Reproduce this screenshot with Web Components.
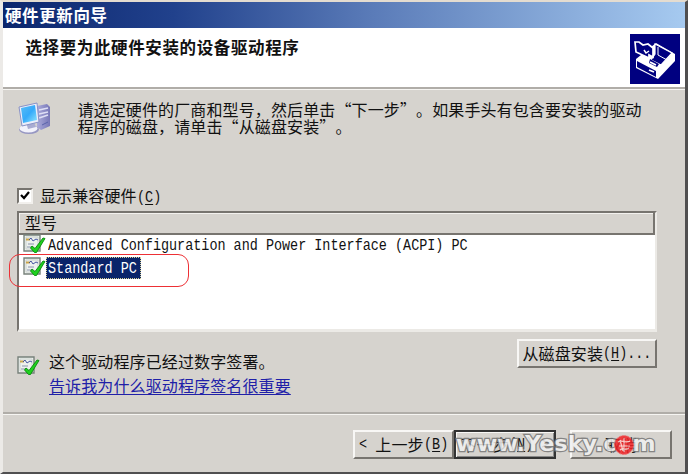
<!DOCTYPE html>
<html lang="zh-CN"><head><meta charset="utf-8"><title>硬件更新向导</title>
<style>html,body{margin:0;width:688px;height:474px;overflow:hidden;background:#d6d3ce}</style></head>
<body><hardware-wizard></hardware-wizard>
<script>
const define=(name,css,html)=>{
  const t=document.createElement('template');
  t.innerHTML=`<style>*,:host{box-sizing:border-box}${css}</style>${html}`;
  customElements.define(name,class extends HTMLElement{
    constructor(){super();this.attachShadow({mode:'open'}).append(t.content.cloneNode(true))}
  });
};
define('latin-text',`:host{display:inline-block;white-space:pre;font:16.5px "Liberation Mono",monospace;letter-spacing:0;line-height:inherit}
span{display:inline-block;transform:scaleX(.815);transform-origin:0 50%;margin-right:calc(var(--n,1) * -1.83px)}`,
`<span><slot></slot></span>`);
define('title-bar',`:host{display:block;height:26px;padding-left:2px;color:#fff;background:linear-gradient(90deg,#0b266d,#21418c 25%,#5a7bb8 54%,#a6caf0);font:bold 16.5px/27px "Noto Sans CJK SC",sans-serif;letter-spacing:.6px;white-space:nowrap}`,`<slot></slot>`);
define('wizard-header',`:host{display:flex;justify-content:space-between;height:59px;background:#fff;padding:7px 5px 0 22.5px;font:bold 16.5px/25px "Noto Sans CJK SC",sans-serif;letter-spacing:.62px}
svg{display:block;margin-top:-1px}`,
`<slot></slot><svg width="50" height="50" viewBox="0 0 50 50"><path fill="#000080" d="M0 0h50v50H0z"/><path d="M6 25 26 9 45 20V27L28 45 6 34Z" fill="#fff"/><path d="M25 10 42 19 31 31 21 26 25 20Z" fill="#000080" stroke="#fff" stroke-width="1.2"/><path d="M28 13v8l9 5" stroke="#fff" fill="none"/><path d="M7 27 26 37v6L7 33Z" fill="#000080"/><path d="m20 25 9 5-2 3-8-4Z" fill="#000080"/><path d="m20 28 6 3M19 36l5 2" stroke="#fff" stroke-width="1.8"/><path d="M5 8h4l4 3 5-1 5 4v9l-4-2v3L6 18Z" fill="#000080" stroke="#fff" stroke-width="1.7"/><path d="m14 16 2 3 3-2" stroke="#fff" stroke-width="1.5" fill="none"/></svg>`);
define('etched-line',`:host{display:block;height:3px;border-top:2px solid #b0ada8;border-bottom:1px solid #f6f5f2;flex:none}`,``);
define('computer-icon',`:host{display:block;width:34px;height:35px;flex:none}svg{display:block}`,
`<svg width="34" height="35" viewBox="0 0 34 35"><defs><linearGradient id="s" x2="1" y2="1"><stop stop-color="#59bdf5"/><stop offset=".5" stop-color="#35aafa"/><stop offset="1" stop-color="#91e7ff"/></linearGradient><linearGradient id="c"><stop stop-color="#aaaada"/><stop offset="1" stop-color="#7777b7"/></linearGradient></defs>
<path d="M19 5 29 3l3 3v19l-9 4-4-3Z" fill="url(#c)"/><path d="m21 9 9-2m-9 6 9-2m-9 6 9-3" stroke="#dedff5" stroke-width="1.6"/><path d="M24 24l6-3" stroke="#5963aa"/><ellipse cx="11" cy="28.5" rx="10" ry="4.5" fill="#9696c2"/><ellipse cx="10.5" cy="27.5" rx="9" ry="4" fill="#f2f2fb"/><path d="M8 21h8l2 5-8 2Z" fill="#a9acd2"/><path d="M1 6 19 2l2 19L4 25Z" fill="#eceefa" stroke="#8992c7"/><path d="m3 7 14-3 2 15L5 22Z" fill="url(#s)"/></svg>`);
define('signed-icon',`:host{display:block;width:23px;height:20px;flex:none}svg{display:block}`,
`<svg width="23" height="20" viewBox="0 0 23 20"><path d="M1 1h16v16H1z" fill="#edf1ee" stroke="#77817b" stroke-width="1.4"/><path d="M3 3h12v12H3z" fill="none" stroke="#cbd2ce"/><path d="M3 5.5h4" stroke="#caa54b" stroke-width="2"/><path d="m6 6 2-2 2 3 3-2 2 1" fill="none" stroke="#4656a0"/><path d="M5 10h6M4 13h5" stroke="#8a94ad"/><path d="m9 12 3 2.5 8-10.5 2 .5-8.5 14h-2l-4-4.5Z" fill="#1fd11f" stroke="#08880c" stroke-width=".9"/></svg>`);
define('check-option',`:host{display:flex;align-items:center;gap:7px;height:22px}i{width:16px;height:16px;background:#fff;border:2px solid;border-color:#77746f #f2f0ed #f2f0ed #77746f}svg{display:block}`,
`<i><svg width="12" height="12"><path d="M2 5 5 8l5-6" fill="none" stroke="#000" stroke-width="2.2"/></svg></i><span><slot></slot></span>`);
define('model-row',`:host{display:flex;height:23px;align-items:center;padding-left:4px}signed-icon{margin-top:-6px}span{display:block;height:22px;line-height:19px;padding:0 4px 0 2px;margin:-3px 0 0;overflow:hidden}:host([selected]) span{background:#0a246a;color:#fff;outline:1px dotted #d6cf95;outline-offset:-1px}`,
`<signed-icon></signed-icon><span><slot></slot></span>`);
define('model-list',`:host{display:block;width:640px;height:121px;background:#fff;border:solid;border-width:2px 2px 3px 2px;border-color:#77746f #eceae6 #eceae6 #77746f}
header{height:22px;background:#d6d3ce;border:solid #77746f;border-width:0 2px 2px 0;padding-left:6px;line-height:19px;box-shadow:inset 1px 1px #f3f1ee}`,
`<header>型号</header><slot></slot>`);
define('push-button',`:host{display:flex;justify-content:center;align-items:center;width:102px;height:29px;background:#d6d3ce;border:solid;border-width:2px;border-color:#f8f7f5 #77746f #77746f #f8f7f5;white-space:pre;padding-bottom:1px;flex:none}:host([primary]){border-color:#333;box-shadow:inset 1px 1px #f8f7f5,inset -1px -1px #888}`,`<slot></slot>`);
define('site-watermark',`:host{position:absolute;left:453px;top:427px;width:200px;height:32px;font:bold 21px/30px "DejaVu Sans","Liberation Sans",sans-serif;letter-spacing:0;color:#f1f1f1;opacity:.85}
span{display:inline-block;white-space:nowrap;-webkit-text-stroke:2.4px #777;paint-order:stroke fill;transform:scaleX(1.065);transform-origin:0 50%}svg{position:absolute;left:157px;top:5px}`,
`<span>www.Yesky.com</span><svg width="22" height="22" viewBox="0 0 22 22"><circle cx="11" cy="11" r="9.5" fill="#f22428" stroke="#ef6465" stroke-dasharray="2 1"/><path d="M5 8c4-3 8 2 12-1M6 12h11M7 16c3-3 6 1 9-2M11 4v14M7 6l3 11" fill="none" stroke="#ffd5d0" stroke-width="1.1"/></svg>`);
define('hardware-wizard',`:host{display:flex;flex-direction:column;position:relative;width:688px;height:474px;background:#d6d3ce;border:solid;border-width:2px 3px 2px 3px;border-color:#e4dcd0 #504f50 #504f50 #eceae7;color:#111;font:16px/17px "Noto Sans CJK SC",sans-serif;letter-spacing:.12px;text-spacing-trim:space-all;overflow:hidden}
.intro{display:flex;padding:11px 15px 0;gap:25.5px;height:95px;white-space:nowrap}.intro p{margin:0;padding-top:0;line-height:17px}
.body{flex:none;height:322px}.opts{padding:0 14px}.bottom{display:flex;justify-content:space-between;padding:7px 28px 0 14px;height:80px}
.sign{display:flex;gap:9px;padding-top:11px;line-height:23.5px}.sign signed-icon{margin-top:6px}.sign div{margin-top:0}a{color:#2020a8;text-decoration:underline;text-underline-offset:2px;text-decoration-thickness:1px}
footer{display:flex;padding:15px 13px 0 0;justify-content:flex-end}footer push-button:first-child{width:101px}footer push-button:last-child{margin-left:14px}
.mark{position:absolute;left:6px;top:252px;width:180px;height:33px;border:1px solid #ed3035;border-radius:11px}u{text-underline-offset:2px}model-list{margin-top:4px}`,
`<title-bar>硬件更新向导</title-bar><wizard-header>选择要为此硬件安装的设备驱动程序</wizard-header><etched-line></etched-line>
<div class="body"><section class="intro"><computer-icon></computer-icon><p>请选定硬件的厂商和型号，然后单击“下一步”。如果手头有包含要安装的驱动<br>程序的磁盘，请单击“从磁盘安装”。</p></section>
<section class="opts"><check-option>显示兼容硬件<latin-text style="--n:3">(<u>C</u>)</latin-text></check-option>
<model-list><model-row><latin-text style="--n:52">Advanced Configuration and Power Interface (ACPI) PC</latin-text></model-row><model-row selected><latin-text style="--n:11">Standard PC</latin-text></model-row></model-list></section>
<section class="bottom"><div class="sign"><signed-icon></signed-icon><div>这个驱动程序已经过数字签署。<br><a>告诉我为什么驱动程序签名很重要</a></div></div><push-button style="width:140px">从磁盘安装<latin-text style="--n:6">(<u>H</u>)...</latin-text></push-button></section></div>
<etched-line></etched-line><footer><push-button><latin-text style="--n:2">&lt; </latin-text>上一步<latin-text style="--n:3">(<u>B</u>)</latin-text></push-button><push-button primary>下一步<latin-text style="--n:5">(<u>N</u>) &gt;</latin-text></push-button><push-button>取消</push-button></footer><div class="mark"></div><site-watermark></site-watermark>`);
</script></body></html>
